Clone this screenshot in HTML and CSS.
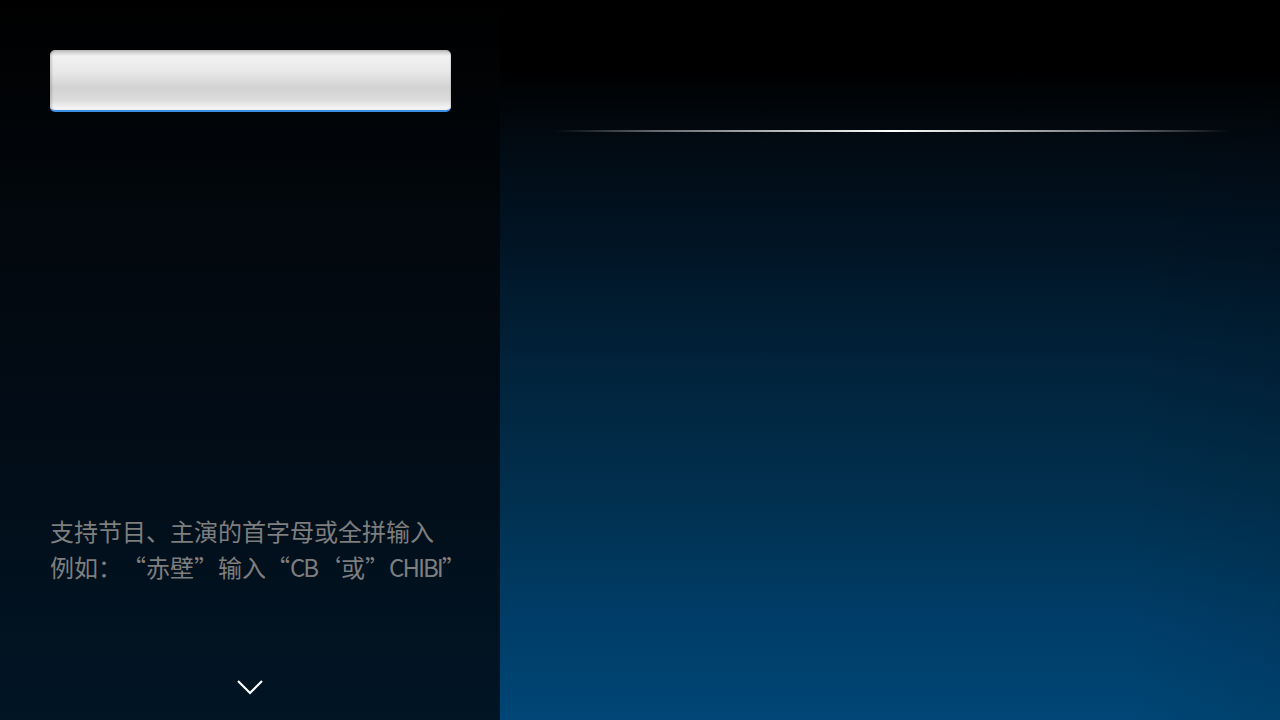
FILE: index.html
```html
<!DOCTYPE html>
<html lang="zh">
<head>
<meta charset="utf-8">
<link rel="stylesheet" href="styles.css">
</head>
<body>
<div class="screen">
  <aside class="left">
    <div class="search"></div>
    <div class="spacer"></div>
    <div class="hint">
      <p>支持节目、主演的首字母或全拼输入</p>
      <p>例如<span class="fw">：“</span>赤壁<span class="fw">”</span>输入<span class="fw">“</span><span class="lat">CB</span><span class="fw">‘</span>或<span class="fw">”</span><span class="lat">CHIBI</span><span class="fw">”</span></p>
    </div>
    <div class="down">
      <svg width="28" height="18" viewBox="0 0 28 18"><path d="M2 3 L14 15 L26 3" fill="none" stroke="#ffffff" stroke-width="2.2"/></svg>
    </div>
  </aside>
  <main class="right">
    <div class="rule"></div>
  </main>
</div>
</body>
</html>
```
FILE: styles.css
```css
html, body { margin: 0; padding: 0; }
body { width: 1280px; height: 720px; overflow: hidden; background: #000; font-family: "Noto Sans CJK SC", "Noto Sans", sans-serif; }
.screen { display: flex; width: 1280px; height: 720px; }
.left {
  width: 500px; height: 720px; box-sizing: border-box;
  padding: 50px 0 0 50px;
  display: flex; flex-direction: column;
  background: linear-gradient(to bottom, #000000 0px, #02070c 200px, #020d18 450px, #011524 720px);
}
.search {
  width: 401px; height: 62px; box-sizing: border-box;
  border-radius: 5px;
  border-bottom: 2px solid #3d8fe4;
  background: linear-gradient(to bottom, #bdbdbd 0px, #f2f2f2 6px, #e8e8e8 22px, #d2d2d2 38px, #dcdcdc 50px, #f4f4f4 58px, #ffffff 60px);
  box-shadow: inset 2px 0 2px rgba(0,0,0,0.15), inset -1px 0 1px rgba(0,0,0,0.1);
}
.spacer { flex: 1; }
.hint { color: #7e7e7e; font-size: 24px; line-height: 36px; margin-bottom: 93px; text-spacing-trim: space-all; }
.hint p { margin: 0; white-space: nowrap; }
.fw { font-feature-settings: "fwid" 1; }
.lat { letter-spacing: -2px; }
.down { width: 400px; display: flex; justify-content: center; margin-bottom: 24px; }
.down svg { display: block; }
.right {
  flex: 1; height: 720px;
  background:
    linear-gradient(to right, rgba(0,0,0,0) 0%, rgba(0,0,0,0) 80%, rgba(0,0,0,0.08) 100%),
    linear-gradient(to bottom, #000000 0px, #000000 70px, #020a12 140px, #011526 250px, #01223a 360px, #01304f 500px, #003d68 620px, #004676 720px);
  padding-top: 130px; box-sizing: border-box;
}
.rule {
  margin: 0 50px 0 55px; height: 2px;
  background: linear-gradient(to right, rgba(255,255,255,0) 0%, rgba(200,200,200,0.5) 15%, rgba(255,255,255,1) 50%, rgba(200,200,200,0.5) 85%, rgba(255,255,255,0) 100%);
}
```
